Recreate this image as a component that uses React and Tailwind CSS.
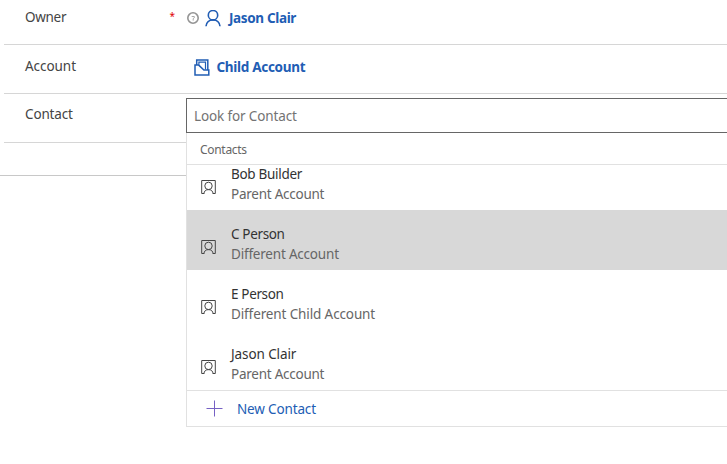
const contacts = [
  { name: 'Bob Builder', account: 'Parent Account', nameClass: 'tracking-[-0.3px]', accountClass: 'tracking-[-0.25px]' },
  { name: 'C Person', account: 'Different Account', active: true, nameClass: 'tracking-[-0.35px]', accountClass: 'tracking-[-0.2px]' },
  { name: 'E Person', account: 'Different Child Account', nameClass: 'tracking-[-0.35px]', accountClass: 'tracking-[-0.12px]' },
  { name: 'Jason Clair', account: 'Parent Account', nameClass: 'tracking-[-0.1px]', accountClass: 'tracking-[-0.25px]' },
];

function PersonIcon() {
  return (
    <svg className="h-[17px] w-4 shrink-0" viewBox="0 0 16 17" fill="none" stroke="#215db4" strokeWidth="1.6">
      <circle cx="8" cy="5.2" r="4.7" />
      <path d="M1 16.200C1.300 12.400 4.200 9.900 8 9.900s6.700 2.500 7 6.300" />
    </svg>
  );
}

function AccountIcon() {
  return (
    <svg className="h-[17px] w-4 shrink-0" viewBox="0 0 16 17" fill="none" stroke="#215db4" strokeWidth="1.5">
      <path d="M2.700 6V.9h11.100v10.200" />
      <path d="M4.900 5.800V3.100h6.600v7.500" strokeWidth="1.2" />
      <path d="M1 16V6.100h3.700l5.200 5h4.900V16z" />
    </svg>
  );
}

function ContactIcon() {
  return (
    <svg className="h-[15px] w-[15px] shrink-0" viewBox="0 0 15 15" fill="none" stroke="#454545" strokeWidth="1">
      <path d="M3 13.500H.7V.5h13.600v13H12" />
      <circle cx="7.5" cy="5.9" r="3.7" />
      <path d="M2.900 14c.1-2.900 1.900-4.400 4.600-4.400S12 11.100 12.100 14" />
    </svg>
  );
}

function LockedIcon() {
  return (
    <svg className="h-3 w-3 shrink-0" viewBox="0 0 12 12" fill="none" stroke="#949494">
      <circle cx="6" cy="6" r="5.2" strokeWidth="1.6" />
      <path d="M4.700 4.500h2.600v1.300L6.200 6.600v2" strokeWidth="0.8" />
    </svg>
  );
}

function Field({ label, required, className, children }) {
  return (
    <div className={`ml-1 flex border-b border-[#d6d6d6] ${className}`}>
      <div className="w-[182px] shrink-0 pl-[21px] leading-5 text-[#444]">
        <div className="flex items-start justify-between">
          <span>{label}</span>
          {required && <span className="pr-[11px] text-[10px] leading-[18px] text-[#e00000]">*</span>}
        </div>
      </div>
      {children}
    </div>
  );
}

function ContactOption({ contact }) {
  return (
    <li className={`flex h-[60px] shrink-0 pl-[14px] pt-[14px] ${contact.active ? 'bg-[#d8d8d8]' : 'bg-white'}`}>
      <div className="mt-4"><ContactIcon /></div>
      <div className="ml-[15px] whitespace-nowrap leading-5">
        <div className={`text-[#333] ${contact.nameClass}`}>{contact.name}</div>
        <div className={`text-[#666] ${contact.accountClass}`}>{contact.account}</div>
      </div>
    </li>
  );
}

export default function App() {
  return (
    <div className="h-[464px] w-full overflow-hidden bg-white font-['Noto_Sans',sans-serif] text-[13.5px]">
      <Field label={<span className="tracking-[-0.3px]">Owner</span>} required className="h-[45px] pt-[7px]">
        <div className="mt-px flex h-5 items-center pl-px font-bold text-[#215db4]">
          <LockedIcon />
          <div className="ml-[6px] flex"><PersonIcon /></div>
          <span className="ml-[8px] tracking-[-0.35px]">Jason Clair</span>
        </div>
      </Field>
      <Field label={<span className="tracking-[-0.05px]">Account</span>} className="h-[49px] pt-[11px]">
        <div className="mt-px flex h-5 items-center pl-2 font-bold text-[#215db4]">
          <AccountIcon />
          <span className="ml-[6.5px] tracking-[-0.3px]">Child Account</span>
        </div>
      </Field>
      <div className="relative">
        <Field label={<span className="tracking-[-0.15px]">Contact</span>} className="h-[49px] pt-[10px]" />
        <div className="h-[33px] border-b border-[#c8c8c8]" />
        <div className="absolute left-[186px] right-0 top-1 bg-white">
          <input
            placeholder="Look for Contact"
            className="block h-[35px] w-full border border-r-0 border-[#666] pl-[7px] pt-px leading-5 tracking-[-0.13px] outline-none placeholder:text-[#737373]"
          />
          <div className="h-[294px] border-b border-l border-[#e1e1e1]">
            <div className="h-8 border-b border-[#e1e1e1] pl-[13px] pt-[9px] text-[12px] leading-4 tracking-[-0.3px] text-[#666]">Contacts</div>
            <ul className="flex h-[225px] flex-col justify-end overflow-hidden">
              {contacts.map((contact) => <ContactOption key={contact.name} contact={contact} />)}
            </ul>
            <button className="flex h-9 w-full items-center border-t border-[#e1e1e1] pl-[19px] text-[#215db4]">
              <svg className="mb-px h-[17px] w-[17px]" viewBox="0 0 17 17" stroke="#7661c4" strokeWidth="1">
                <path d="M.5 8.500h16M8.500.5v16" />
              </svg>
              <span className="ml-[14px] pt-0.5 tracking-[-0.15px]">New Contact</span>
            </button>
          </div>
        </div>
      </div>
    </div>
  );
}
